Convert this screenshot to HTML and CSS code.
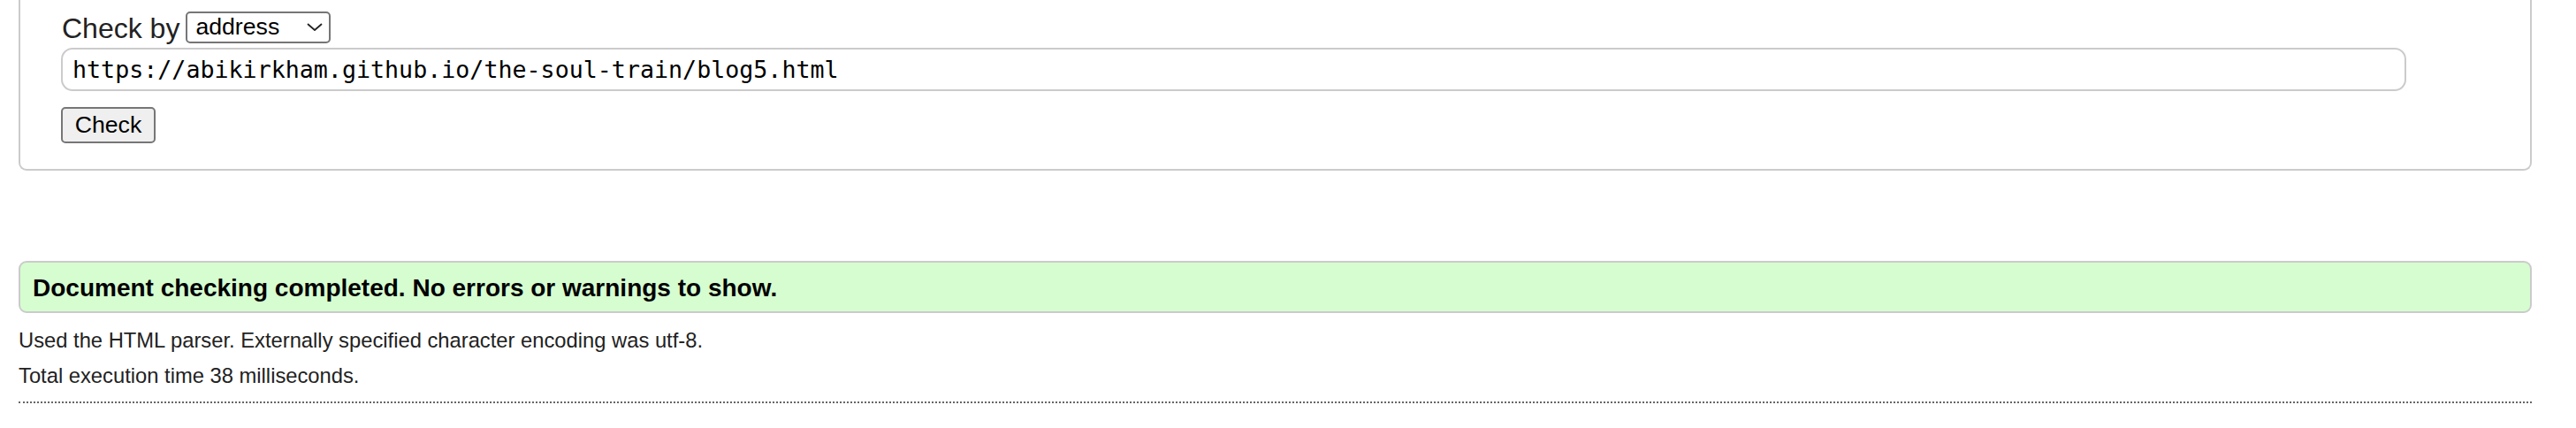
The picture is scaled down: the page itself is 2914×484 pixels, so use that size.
FILE: index.html
```html
<!DOCTYPE html>
<html lang="en">
<head>
<meta charset="utf-8">
<title>Nu Html Checker</title>
<link rel="stylesheet" href="styles.css">
</head>
<body>
<form class="check-form">
  <fieldset class="panel">
    <div class="by-row">
      <label class="by-label" for="docselect">Check by</label>
      <span class="select-wrap">
        <select id="docselect" class="by-select">
          <option>address</option>
          <option>file upload</option>
          <option>text input</option>
        </select>
        <svg class="chev" width="18" height="10" viewBox="0 0 18 10" aria-hidden="true"><path d="M1.5 1.5 L9 8 L16.5 1.5" fill="none" stroke="#222" stroke-width="1.8" stroke-linecap="round" stroke-linejoin="round"/></svg>
      </span>
    </div>
    <input class="url-input" type="url" value="https://abikirkham.github.io/the-soul-train/blog5.html">
    <div class="btn-row"><button type="button" class="check-btn">Check</button></div>
  </fieldset>
</form>

<div class="result-box">
  <h2 class="result-title">Document checking completed. No errors or warnings to show.</h2>
</div>
<p class="meta">Used the HTML parser. Externally specified character encoding was utf-8.</p>
<p class="meta">Total execution time 38 milliseconds.</p>
<hr class="dots">
</body>
</html>
```
FILE: styles.css
```css
html, body {
  margin: 0;
  padding: 0;
  background: #fff;
}
body {
  padding: 0 50px 0 21px;
  font-family: "Liberation Sans", Arial, Helvetica, sans-serif;
  color: #222;
}
.check-form {
  margin: 0;
}
.panel {
  margin: 0;
  min-width: 0;
  border: 2px solid #cbcbcb;
  border-top: none;
  border-radius: 0 0 9px 9px;
  padding: 13px 46px 29px 46px;
}
.by-row {
  display: flex;
  align-items: center;
  gap: 7px;
  height: 36px;
}
.by-label {
  font-size: 32px;
  line-height: 36px;
  padding-left: 1px;
  padding-top: 2px;
  color: #222;
}
.select-wrap {
  position: relative;
  display: inline-flex;
}
.by-select {
  appearance: none;
  -webkit-appearance: none;
  box-sizing: border-box;
  width: 164px;
  height: 36px;
  margin: 0;
  border: 2px solid #767676;
  border-radius: 5px;
  background: #fff;
  color: #000;
  font-family: "Liberation Sans", Arial, sans-serif;
  font-size: 26.67px;
  padding: 0 0 2px 9px;
}
.chev {
  position: absolute;
  right: 9px;
  top: 13px;
  pointer-events: none;
}
.url-input {
  display: block;
  box-sizing: border-box;
  width: 2653px;
  height: 49px;
  margin: 5px 0 0 0;
  border: 2px solid #cbcbcb;
  border-radius: 13px;
  padding: 0 11px;
  font-family: "DejaVu Sans Mono", "Liberation Mono", monospace;
  font-size: 26.67px;
  color: #000;
  background: #fff;
}
.btn-row {
  margin-top: 18px;
  display: flex;
}
.check-btn {
  box-sizing: border-box;
  width: 107px;
  height: 41px;
  margin: 0;
  border: 2px solid #767676;
  border-radius: 5px;
  background: #efefef;
  color: #000;
  font-family: "Liberation Sans", Arial, sans-serif;
  font-size: 26.67px;
  padding: 0 0 1px 0;
}
.result-box {
  margin-top: 102px;
  border: 2px solid #cbcbcb;
  border-radius: 9px;
  background: #d6fdd0;
}
.result-title {
  margin: 0;
  padding: 0 14px;
  height: 55px;
  line-height: 57px;
  font-size: 28px;
  font-weight: bold;
  color: #000;
}
.meta {
  margin: 0;
  font-size: 23.75px;
  line-height: 40px;
  color: #222;
}
.meta:first-of-type {
  margin-top: 11px;
}
.dots {
  margin: 9px 0 0 0;
  height: 0;
  border: none;
  border-top: 2px dotted #666;
}
```
